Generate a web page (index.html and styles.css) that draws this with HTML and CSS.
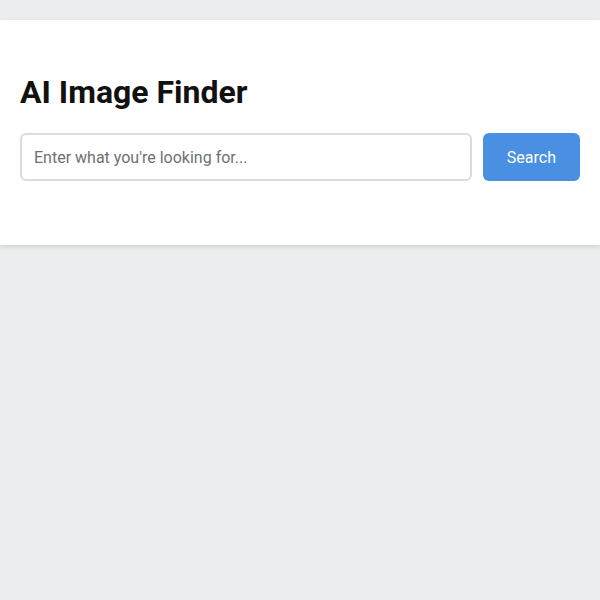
FILE: index.html
```html
<!DOCTYPE html>
<html lang="en">
<head>
    <meta charset="UTF-8">
    <meta name="viewport" content="width=device-width, initial-scale=1.0">
    <title>AI Image Finder</title>
    <link rel="stylesheet" href="styles.css">
</head>
<body>
    <div class="container">
        <h1>AI Image Finder</h1>
        <form class="search-bar" onsubmit="return false">
            <input type="text" id="query" placeholder="Enter what you're looking for...">
            <button type="submit">Search</button>
        </form>
        <div id="results"></div>
    </div>
</body>
</html>
```

FILE: styles.css
```css
body {
    font-family: Roboto, "Liberation Sans", Arial, sans-serif;
    margin: 0;
    padding: 20px 0;
    background-color: #ebeeef;
}
.container {
    background: white;
    padding: 32px 20px;
    box-shadow: 0 2px 5px rgba(0, 0, 0, 0.12);
}
h1 {
    font-size: 32px;
    font-weight: bold;
    color: #111;
    margin: 21px 0 22px;
}
.search-bar {
    display: flex;
    gap: 11px;
    margin-bottom: 32px;
}
.search-bar input {
    flex: 1;
    font-family: inherit;
    font-size: 16px;
    padding: 12.5px 12px;
    border: 2px solid #dcdcdc;
    border-radius: 6px;
    outline: none;
}
.search-bar input::placeholder {
    color: #707070;
}
.search-bar button {
    font-family: inherit;
    font-size: 16px;
    padding: 0 24px;
    border: none;
    border-radius: 6px;
    background-color: #4a90e2;
    color: white;
    cursor: pointer;
}
```
